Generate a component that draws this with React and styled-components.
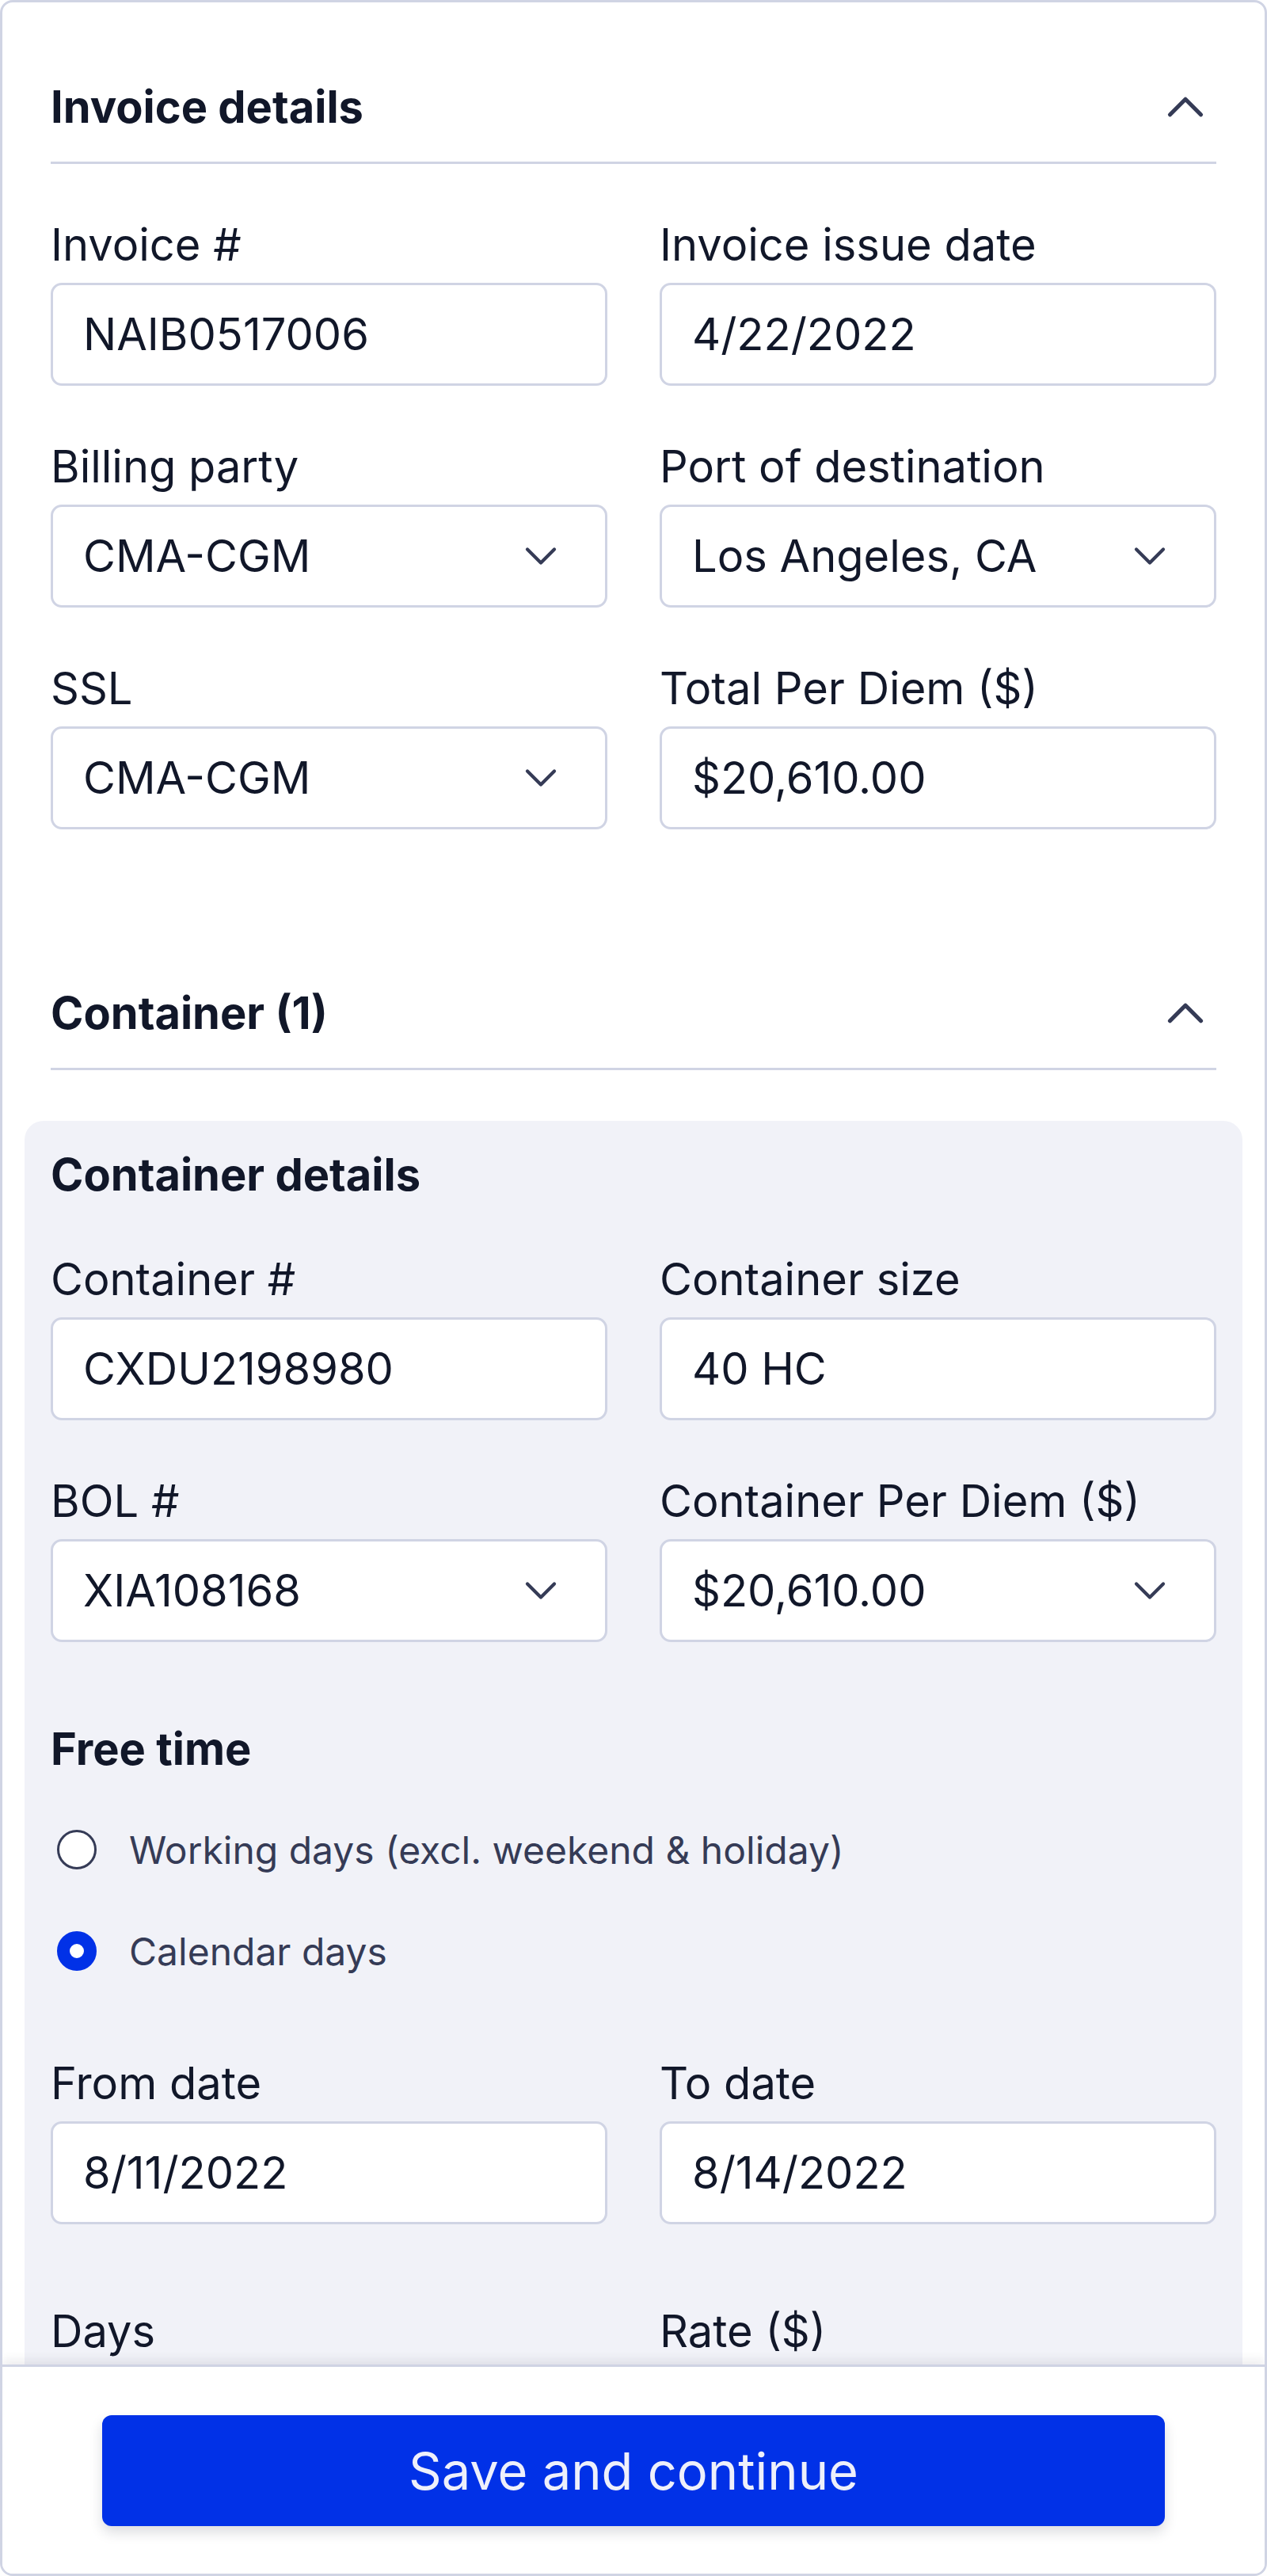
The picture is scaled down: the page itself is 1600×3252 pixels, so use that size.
import React from 'react';
import styled, { createGlobalStyle } from 'styled-components';
import { ChevronDown, ChevronUp } from 'lucide-react';

const Global = createGlobalStyle`
  html, body { margin: 0; padding: 0; }
  body { font-family: Inter, "Noto Sans", sans-serif; color: #111729; background: #fff; }
  * { box-sizing: border-box; }
`;

const Card = styled.div`
  height: 100vh;
  border: 3px solid #d0d4e4;
  border-radius: 16px;
  display: flex;
  flex-direction: column;
  overflow: hidden;
  background: #fff;
`;

const Main = styled.main`
  flex: 1;
  overflow: hidden;
  padding: 0 61px;
`;

const SectionHeader = styled.div`
  display: flex;
  align-items: center;
  justify-content: space-between;
  height: 142px;
  border-bottom: 3px solid #d0d4e4;
  margin-top: ${(p) => p.$top}px;
`;

const SectionTitle = styled.h2`
  margin: 0;
  font-size: 56px;
  font-weight: 700;
  line-height: 1;
  color: #111729;
`;

const Toggle = styled.span`
  display: flex;
  color: #353b56;
`;

const Grid = styled.div`
  display: grid;
  grid-template-columns: 1fr 1fr;
  column-gap: 66px;
  row-gap: 68px;
  margin-top: ${(p) => p.$top}px;
`;

const Field = styled.div`
  display: flex;
  flex-direction: column;
`;

const Label = styled.label`
  font-size: 56px;
  line-height: 68px;
  margin-bottom: 14px;
  color: #111729;
`;

const Box = styled.div`
  height: 130px;
  border: 3px solid #d0d4e4;
  border-radius: 14px;
  background: #fff;
  display: flex;
  align-items: center;
  justify-content: space-between;
  padding: 0 47px 0 38px;
  font-size: 56px;
  color: #111729;
`;

const Panel = styled.section`
  margin: 64px -33px 0;
  padding: 34px 33px 200px;
  background: #f1f2f8;
  border-radius: 24px;
`;

const PanelTitle = styled.h3`
  margin: 0;
  font-size: 56px;
  font-weight: 700;
  line-height: 68px;
  color: #111729;
  margin-top: ${(p) => p.$top || 0}px;
`;

const RadioList = styled.div`
  margin-top: 29px;
  display: flex;
  flex-direction: column;
`;

const RadioRow = styled.div`
  height: 128px;
  display: flex;
  align-items: center;
  gap: 41px;
  font-size: 48px;
  color: #353b56;
`;

const RadioDot = styled.span`
  width: 50px;
  height: 50px;
  margin-left: 8px;
  border-radius: 50%;
  background: #fff;
  flex-shrink: 0;
  border: ${(p) => (p.$checked ? '16px solid #0131e7' : '3.5px solid #353b56')};
`;

const Footer = styled.footer`
  flex-shrink: 0;
  position: relative;
  z-index: 1;
  background: #fff;
  border-top: 3px solid #d0d4e4;
  padding: 61px 126px 60px;
  box-shadow: 0 -6px 12px rgba(20, 24, 50, 0.08);
`;

const Button = styled.button`
  width: 100%;
  height: 140px;
  border: 0;
  border-radius: 12px;
  background: #0131e7;
  color: #eef0fb;
  font-family: Inter, "Noto Sans", sans-serif;
  font-size: 65px;
  box-shadow: 0 8px 16px rgba(20, 24, 50, 0.15);
`;

const TextField = ({ label, value }) => (
  <Field>
    <Label>{label}</Label>
    <Box>{value}</Box>
  </Field>
);

const SelectField = ({ label, value }) => (
  <Field>
    <Label>{label}</Label>
    <Box>
      <span>{value}</span>
      <ChevronDown size={68} strokeWidth={1.5} color="#353b56" />
    </Box>
  </Field>
);

export default function App() {
  return (
    <>
      <Global />
      <Card>
        <Main>
          <SectionHeader $top={62}>
            <SectionTitle>Invoice details</SectionTitle>
            <Toggle><ChevronUp size={78} strokeWidth={1.6} /></Toggle>
          </SectionHeader>
          <Grid $top={68}>
            <TextField label="Invoice #" value="NAIB0517006" />
            <TextField label="Invoice issue date" value="4/22/2022" />
            <SelectField label="Billing party" value="CMA-CGM" />
            <SelectField label="Port of destination" value="Los Angeles, CA" />
            <SelectField label="SSL" value="CMA-CGM" />
            <TextField label="Total Per Diem ($)" value="$20,610.00" />
          </Grid>

          <SectionHeader $top={162}>
            <SectionTitle>Container (1)</SectionTitle>
            <Toggle><ChevronUp size={78} strokeWidth={1.6} /></Toggle>
          </SectionHeader>

          <Panel>
            <PanelTitle>Container details</PanelTitle>
            <Grid $top={64}>
              <TextField label="Container #" value="CXDU2198980" />
              <TextField label="Container size" value="40 HC" />
              <SelectField label="BOL #" value="XIA108168" />
              <SelectField label="Container Per Diem ($)" value="$20,610.00" />
            </Grid>
            <PanelTitle $top={101}>Free time</PanelTitle>
            <RadioList>
              <RadioRow><RadioDot />Working days (excl. weekend &amp; holiday)</RadioRow>
              <RadioRow><RadioDot $checked />Calendar days</RadioRow>
            </RadioList>
            <Grid $top={69}>
              <TextField label="From date" value="8/11/2022" />
              <TextField label="To date" value="8/14/2022" />
            </Grid>
            <Grid $top={101}>
              <TextField label="Days" value="" />
              <TextField label="Rate ($)" value="" />
            </Grid>
          </Panel>
        </Main>
        <Footer>
          <Button>Save and continue</Button>
        </Footer>
      </Card>
    </>
  );
}
